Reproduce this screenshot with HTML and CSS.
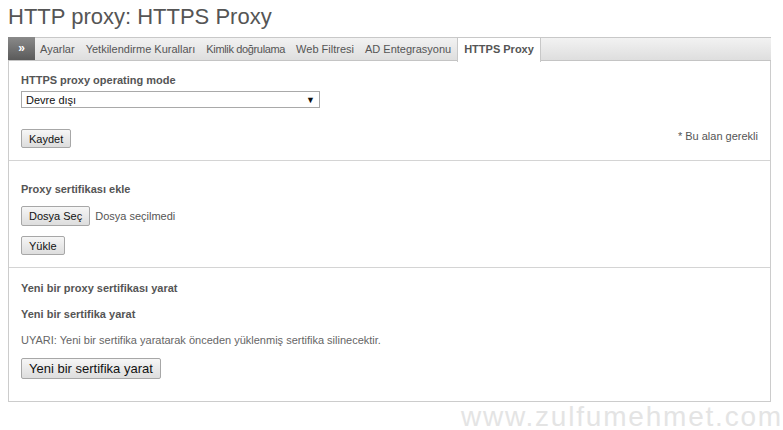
FILE: index.html
```html
<!DOCTYPE html>
<html lang="tr">
<head>
    <meta charset="UTF-8">
    <title>HTTP proxy: HTTPS Proxy</title>
    <link rel="stylesheet" href="styles.css">
</head>
<body>
    <h1 class="title">HTTP proxy: HTTPS Proxy</h1>
    <div class="panel">
        <ul class="tabs">
            <li class="tab-toggle">&raquo;</li>
            <li>Ayarlar</li>
            <li>Yetkilendirme Kuralları</li>
            <li class="narrow">Kimlik doğrulama</li>
            <li>Web Filtresi</li>
            <li>AD Entegrasyonu</li>
            <li class="active">HTTPS Proxy</li>
        </ul>

        <div class="section">
            <label class="label">HTTPS proxy operating mode</label>
            <div class="select">
                <span>Devre dışı</span>
                <span class="arrow">&#9660;</span>
            </div>
            <div class="form-foot">
                <button class="btn">Kaydet</button>
                <span class="required">* Bu alan gerekli</span>
            </div>
        </div>

        <div class="section section-upload">
            <div class="label">Proxy sertifikası ekle</div>
            <div class="file-row">
                <button class="btn btn-file">Dosya Seç</button>
                <span class="file-name">Dosya seçilmedi</span>
            </div>
            <button class="btn">Yükle</button>
        </div>

        <div class="section section-new">
            <div class="label">Yeni bir proxy sertifikası yarat</div>
            <div class="label">Yeni bir sertifika yarat</div>
            <p class="warning">UYARI: Yeni bir sertifika yaratarak önceden yüklenmiş sertifika silinecektir.</p>
            <button class="btn btn-big">Yeni bir sertifika yarat</button>
        </div>
    </div>
    <div class="watermark">www.zulfumehmet.com</div>
</body>
</html>
```

FILE: styles.css
```css
body {
    margin: 0;
    background-color: #ffffff;
    font-family: "Liberation Sans", Arial, sans-serif;
    color: #555555;
    font-size: 11px;
}
.title {
    margin: 0;
    padding: 4px 0 0 8px;
    height: 33px;
    font-size: 22px;
    font-weight: normal;
    color: #555555;
    line-height: 26px;
}
.panel {
    margin: 0 12px 0 8px;
    border: 1px solid #cccccc;
    border-top: none;
    height: 364px;
}
.tabs {
    list-style: none;
    margin: 0 -1px;
    padding: 0;
    display: flex;
    height: 22px;
    background: linear-gradient(#f2f2f2, #dedede);
    border-top: 1px solid #c8c8c8;
    border-bottom: 1px solid #c4c4c4;
}
.tabs li {
    padding: 0 6px 0 5px;
    line-height: 22px;
    color: #555555;
    font-size: 11px;
}
.tabs li.narrow {
    letter-spacing: -0.35px;
}
.tabs .tab-toggle {
    width: 15px;
    padding: 0 6px;
    margin-top: -1px;
    line-height: 23px;
    background: linear-gradient(#8a8a8a, #5a5a5a);
    color: #ffffff;
    font-weight: bold;
    font-size: 12px;
    text-align: center;
}
.tabs li.active {
    margin-top: -1px;
    padding: 0 6px;
    height: 24px;
    line-height: 23px;
    background-color: #ffffff;
    border: 1px solid #c8c8c8;
    border-bottom: none;
    font-weight: bold;
}
.section {
    padding: 13px 12px 12px 12px;
    border-bottom: 1px solid #d4d4d4;
}
.section-new {
    border-bottom: none;
}
.label {
    display: block;
    font-weight: bold;
    font-size: 11px;
    color: #555555;
    margin-bottom: 5px;
}
.select {
    width: 293px;
    height: 15px;
    border: 1px solid #a9a9a9;
    padding: 0 0 0 4px;
    display: flex;
    justify-content: space-between;
    align-items: center;
    color: #111111;
    font-size: 11px;
}
.select .arrow {
    font-size: 9px;
    margin-right: 4px;
    color: #111111;
}
.form-foot {
    margin-top: 21px;
    display: flex;
    justify-content: space-between;
    align-items: center;
}
.required {
    color: #555555;
    margin-top: -5px;
}
.btn {
    font-family: "Liberation Sans", Arial, sans-serif;
    font-size: 11px;
    color: #111111;
    height: 19px;
    padding: 0 7px;
    border: 1px solid #a7a7a7;
    border-radius: 2px;
    background: linear-gradient(#f6f6f6, #dddddd);
}
.section-upload {
    padding-top: 22px;
}
.file-row {
    display: flex;
    align-items: center;
    margin: 11px 0 10px;
}
.btn-file {
    padding: 0 7px;
    height: 20px;
}
.file-name {
    margin-left: 5px;
    font-size: 11px;
    color: #555555;
}
.section-new {
    padding-top: 14px;
}
.section-new .label {
    margin-bottom: 14px;
}
.warning {
    margin: 0 0 12px;
    font-size: 11px;
    color: #666666;
}
.btn-big {
    height: 21px;
    padding: 0 7px;
    font-size: 13px;
}
.watermark {
    margin-top: 4px;
    text-align: right;
    font-size: 28px;
    line-height: 22px;
    color: #e4e4e4;
    letter-spacing: 1.8px;
}
```
